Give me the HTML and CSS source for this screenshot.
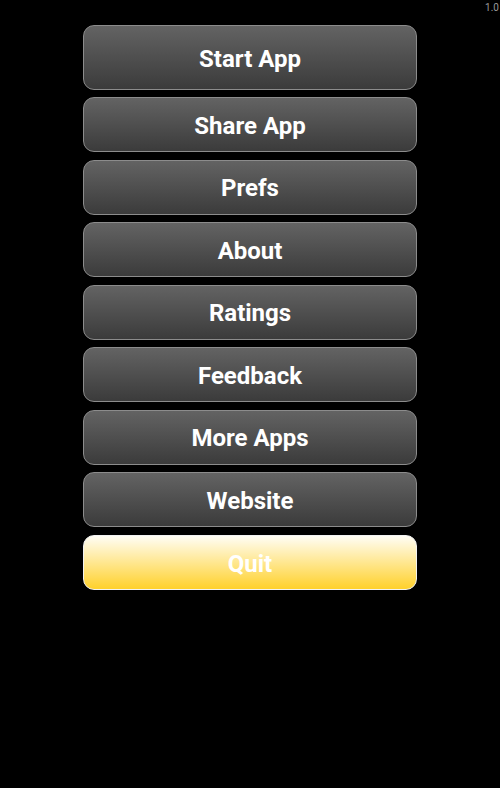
FILE: index.html
```html
<!DOCTYPE html>
<html lang="en">
<head>
	<meta charset="UTF-8">
	<title>Menu</title>
	<link rel="stylesheet" href="styles.css">
</head>
<body>
<div class="version">1.0</div>
<div class="menu">
	<a class="btn btn-start" href="javascript:void(0);">Start App</a>
	<a class="btn" href="javascript:void(0);">Share App</a>
	<a class="btn" href="javascript:void(0);">Prefs</a>
	<a class="btn" href="javascript:void(0);">About</a>
	<a class="btn" href="javascript:void(0);">Ratings</a>
	<a class="btn" href="javascript:void(0);">Feedback</a>
	<a class="btn" href="javascript:void(0);">More Apps</a>
	<a class="btn" href="javascript:void(0);">Website</a>
	<a class="btn btn-quit" href="javascript:void(0);">Quit</a>
</div>
</body>
</html>
```
FILE: styles.css
```css
body {
	margin: 0;
	height: 788px;
	background: #000;
	font-family: Roboto, "Liberation Sans", sans-serif;
	overflow: hidden;
}
.version {
	height: 16px;
	padding-right: 1px;
	text-align: right;
	font-size: 10px;
	line-height: 16px;
	color: #999;
}
.menu {
	display: flex;
	flex-direction: column;
	gap: 7.57px;
	width: 334px;
	margin: 9px 0 0 83px;
}
.btn {
	display: flex;
	align-items: center;
	justify-content: center;
	box-sizing: border-box;
	height: 55px;
	padding-top: 2px;
	border: 1.5px solid #8c8c8c;
	border-radius: 11px;
	background: linear-gradient(#636363, #3b3b3b);
	color: #fff;
	font-size: 24px;
	font-weight: bold;
	text-decoration: none;
}
.btn-start {
	height: 65px;
	margin-bottom: -0.5px;
}
.btn-quit {
	border-color: #f2f2f2;
	background: linear-gradient(#fffdf5, #ffd12b);
}
```
